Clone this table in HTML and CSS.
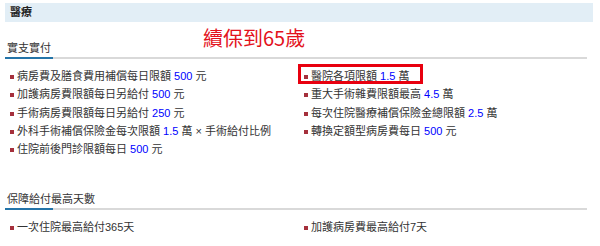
FILE: index.html
```html
<!DOCTYPE html>
<html lang="zh-Hant">
	<head>
		<meta charset="UTF-8">
		<title>醫療</title>
		<link rel="stylesheet" href="styles.css">
	</head>
	<body>
		<div class="panel">
			<div class="panel-head">醫療</div>

			<div class="note">續保到65歲</div>

			<div class="tab"><span>實支實付</span></div>
			<div class="cols">
				<ul class="col">
					<li>病房費及膳食費用補償每日限額 <b>500</b> 元</li>
					<li>加護病房費限額每日另給付 <b>500</b> 元</li>
					<li>手術病房費限額每日另給付 <b>250</b> 元</li>
					<li>外科手術補償保險金每次限額 <b>1.5</b> 萬 × 手術給付比例</li>
					<li>住院前後門診限額每日 <b>500</b> 元</li>
				</ul>
				<ul class="col">
					<li class="boxed">醫院各項限額 <b>1.5</b> 萬</li>
					<li>重大手術雜費限額最高 <b>4.5</b> 萬</li>
					<li>每次住院醫療補償保險金總限額 <b>2.5</b> 萬</li>
					<li>轉換定額型病房費每日 <b>500</b> 元</li>
				</ul>
			</div>

			<div class="tab tab-days"><span>保障給付最高天數</span></div>
			<div class="cols">
				<ul class="col">
					<li>一次住院最高給付365天</li>
				</ul>
				<ul class="col">
					<li>加護病房費最高給付7天</li>
				</ul>
			</div>
		</div>
	</body>
</html>
```

FILE: styles.css
```css
body {
	margin: 0;
	background: #fff;
	font-family: "Liberation Sans", "Noto Sans CJK TC", sans-serif;
	font-size: 11px;
	color: #333;
}
.panel {
	position: relative;
	margin: 3px 7px 0 5px;
}
.panel-head {
	height: 19px;
	line-height: 19px;
	padding-left: 5px;
	background: #e2eef6;
	font-weight: bold;
	color: #222;
}
/* hand written red remark over the panel */
.note {
	position: absolute;
	left: 198px;
	top: 22px;
	font-family: "Noto Sans CJK TC", sans-serif;
	font-size: 20px;
	line-height: 26px;
	color: #e3121c;
}
.tab {
	margin: 17px 6px 0 0;
	height: 18px;
	line-height: 18px;
	padding: 0 0 2px 2px;
	background:
		linear-gradient(#2474a8, #2474a8) left bottom / 48px 2px no-repeat,
		linear-gradient(#d9d9d9, #d9d9d9) left bottom / 100% 2px no-repeat;
}
.tab-days {
	margin-top: 32px;
}
.cols {
	display: flex;
	margin-top: 8px;
}
.col {
	list-style: none;
	margin: 0;
	padding: 0;
}
.col:first-child {
	width: 294px;
	padding-left: 5px;
}
.col li {
	position: relative;
	line-height: 18.3px;
	white-space: nowrap;
}
.col li::before {
	content: "";
	display: inline-block;
	width: 4px;
	height: 4px;
	margin: 0 3px 1px 0;
	background: #a5303c;
}
.col b {
	font-weight: normal;
	color: #0000ff;
}
.boxed::after {
	content: "";
	position: absolute;
	left: -6px;
	top: -3px;
	width: 125px;
	height: 20px;
	box-sizing: border-box;
	border: 3px solid #e8000f;
}
```
